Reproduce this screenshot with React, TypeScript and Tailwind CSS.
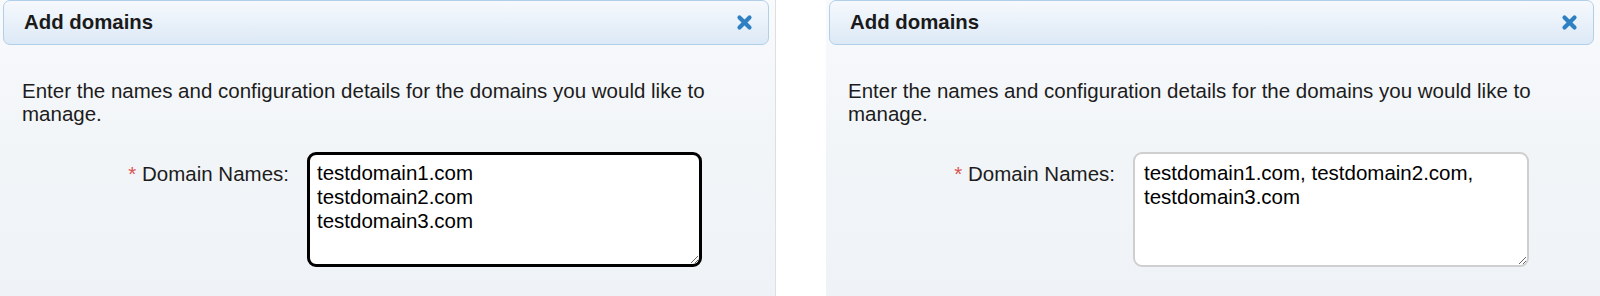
import React from "react";

const font = { fontFamily: '"Liberation Sans", Arial, sans-serif' };

function CloseIcon() {
  return (
    <svg width="17" height="17" viewBox="0 0 17 17" aria-hidden="true">
      <path d="M3.5 3.5 L13.5 13.5 M13.5 3.5 L3.5 13.5" stroke="#2f80c3" strokeWidth="4.2" strokeLinecap="round" fill="none" />
    </svg>
  );
}

function Panel({ focused, value }: { focused: boolean; value: string }) {
  return (
    <div className="flex h-full flex-col bg-linear-to-b from-[#f8fafc] via-[#f2f5f8] to-[#eff3f7]">
      <div className="ml-[3px] mr-[6px] flex h-[45px] items-center justify-between rounded-[7px] border border-[#b2cfe9] bg-linear-to-b from-[#f6f9fd] to-[#dce9f6] pl-[20px] pr-[15px]">
        <span className="text-[20.4px] font-bold leading-[23px] text-[#1a1a1a]">Add domains</span>
        <CloseIcon />
      </div>
      <p className="mt-[34px] w-[740px] pl-[22px] text-[20.5px] leading-[23px] text-[#1c1c1c]">
        Enter the names and configuration details for the domains you would like to manage.
      </p>
      <div className="mt-[27px] flex items-start">
        <div className="mt-[10px] w-[289px] text-right text-[20.5px] leading-[23px] text-[#1c1c1c]">
          <span className="text-[#d9534f]">*</span> Domain Names:
        </div>
        <textarea
          readOnly
          defaultValue={value}
          style={font}
          className={
            focused
              ? "ml-[18px] h-[115px] w-[395px] rounded-[9px] border-[3px] border-black bg-white pl-[7px] pt-[6px] text-[20.5px] leading-[24px] text-black outline-none"
              : "ml-[18px] h-[115px] w-[396px] rounded-[9px] border-2 border-[#cfcfcf] bg-white pl-[9px] pt-[7px] text-[20.5px] leading-[24px] text-black outline-none"
          }
        />
      </div>
    </div>
  );
}

export default function App() {
  return (
    <div style={font} className="flex h-[296px] w-[1600px] overflow-hidden bg-white">
      <div className="w-[776px] border-r border-[#dcdfe3]">
        <Panel focused value={"testdomain1.com\ntestdomain2.com\ntestdomain3.com"} />
      </div>
      <div className="w-[50px] bg-white" />
      <div className="w-[774px]">
        <Panel focused={false} value={"testdomain1.com, testdomain2.com, testdomain3.com"} />
      </div>
    </div>
  );
}
